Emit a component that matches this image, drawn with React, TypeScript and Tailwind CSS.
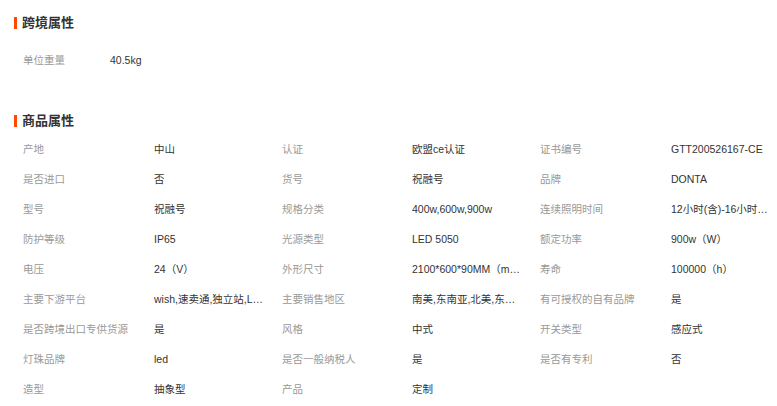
const crossBorder = [{ label: "单位重量", value: "40.5kg" }];

const productAttrs: [string, string][] = [
  ["产地", "中山"],
  ["认证", "欧盟ce认证"],
  ["证书编号", "GTT200526167-CE"],
  ["是否进口", "否"],
  ["货号", "祝融号"],
  ["品牌", "DONTA"],
  ["型号", "祝融号"],
  ["规格分类", "400w,600w,900w"],
  ["连续照明时间", "12小时(含)-16小时(不含)"],
  ["防护等级", "IP65"],
  ["光源类型", "LED 5050"],
  ["额定功率", "900w（W）"],
  ["电压", "24（V）"],
  ["外形尺寸", "2100*600*90MM（mm）"],
  ["寿命", "100000（h）"],
  ["主要下游平台", "wish,速卖通,独立站,LAZADA,亚马逊"],
  ["主要销售地区", "南美,东南亚,北美,东北亚,中东"],
  ["有可授权的自有品牌", "是"],
  ["是否跨境出口专供货源", "是"],
  ["风格", "中式"],
  ["开关类型", "感应式"],
  ["灯珠品牌", "led"],
  ["是否一般纳税人", "是"],
  ["是否有专利", "否"],
  ["造型", "抽象型"],
  ["产品", "定制"],
];

function SectionTitle({ title }: { title: string }) {
  return (
    <div className="flex items-center gap-[5px] h-[14px] pl-[14px]">
      <span className="w-[3px] h-[12px] bg-[#ff4a00]" />
      <h2 className="text-[13px] font-bold leading-[14px] text-[#333]">{title}</h2>
    </div>
  );
}

export default function App() {
  return (
    <div
      className="w-[777px] h-[406px] overflow-hidden bg-white text-[10.5px]"
      style={{ fontFamily: '"Liberation Sans", "Noto Sans CJK SC", sans-serif' }}
    >
      <div className="pt-[16px]">
        <SectionTitle title="跨境属性" />
      </div>

      <div className="mt-[15px] pl-[23px]">
        {crossBorder.map((row) => (
          <div key={row.label} className="flex h-[30px] leading-[30px]">
            <span className="w-[87px] text-[#999]">{row.label}</span>
            <span className="text-[#333]">{row.value}</span>
          </div>
        ))}
      </div>

      <div className="mt-[39px]">
        <SectionTitle title="商品属性" />
      </div>

      <div className="mt-[6px] pl-[23px] pr-[6px] grid grid-cols-[131px_128px_130px_128px_131px_1fr]">
        {productAttrs.map(([label, value]) => (
          <div key={label} className="contents">
            <span className="h-[30px] leading-[30px] text-[#999] whitespace-nowrap">{label}</span>
            <span className="h-[30px] leading-[30px] text-[#333] max-w-[110px] truncate">{value}</span>
          </div>
        ))}
      </div>
    </div>
  );
}
